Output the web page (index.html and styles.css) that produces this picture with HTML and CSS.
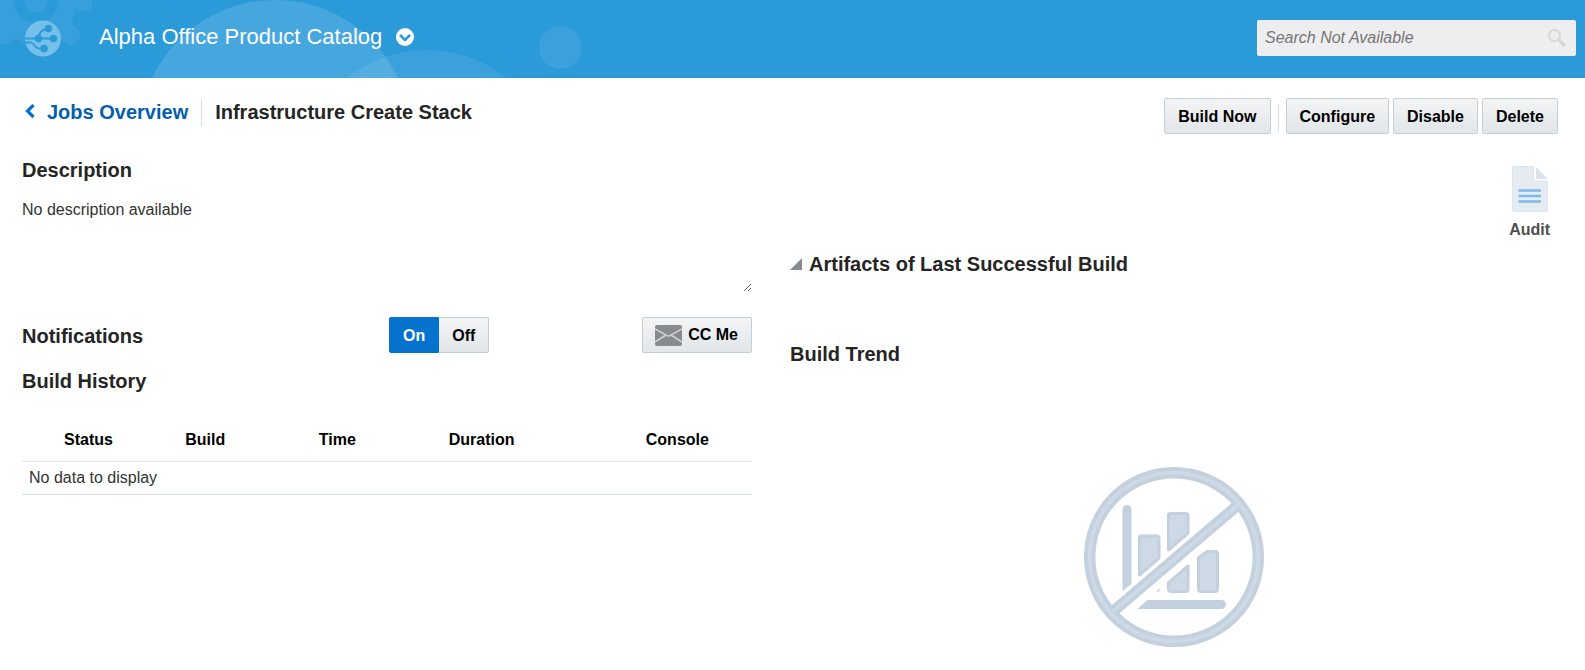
FILE: index.html
```html
<!DOCTYPE html>
<html lang="en">
<head>
<meta charset="utf-8">
<title>Infrastructure Create Stack</title>
<link rel="stylesheet" href="styles.css">
</head>
<body>
<header class="banner">
  <svg class="banner-art" width="640" height="78" viewBox="0 0 640 78" aria-hidden="true">
    <g fill="#fff">
      <circle cx="275" cy="136" r="136" opacity=".13"/>
      <circle cx="427" cy="178" r="128" opacity=".08"/>
      <circle cx="560.5" cy="47.5" r="21.5" opacity=".08"/>
      <path opacity=".06" fill-rule="evenodd" d="M0 0H92V7Q91 11 87 11H79Q75 11 74 15L72 21Q72 24 74 26L80 31Q82 34 80 37L75 43Q72 46 68 44L60 39Q58 38 55 39Q46 46 36 46Q26 46 19 40Q16 38 13 40L6 44Q3 45 0 43ZM13 0A23 23 0 1 0 59 0H48A12 12 0 1 1 24 0Z"/>
    </g>
  </svg>
  <svg class="logo" width="37" height="37" viewBox="0 0 37 37" aria-hidden="true">
    <circle cx="18" cy="18.500" r="18" fill="#74c0e9"/>
    <g fill="#2b9ad9"><circle cx="23.500" cy="8.500" r="3.800"/><circle cx="13.500" cy="18.500" r="3.800"/><circle cx="28.500" cy="18.500" r="3.800"/><circle cx="19" cy="28.500" r="3.800"/></g>
    <path d="M0 18.500H28M13.500 18Q14 10 23 8.500M0 22.500H6Q8 23 10 26T18 28.500" fill="none" stroke="#2b9ad9" stroke-width="1.800"/>
  </svg>
  <button class="project" type="button">Alpha Office Product Catalog
    <svg width="18" height="18" viewBox="0 0 18 18" aria-hidden="true"><circle cx="9" cy="9" r="9" fill="#fff"/><path d="M4 7L9 12L14 7" fill="none" stroke="#2b9ad9" stroke-width="2.600"/></svg>
  </button>
  <div class="search">
    <input type="search" placeholder="Search Not Available" aria-label="Search" disabled>
    <svg width="18" height="18" viewBox="0 0 18 18" fill="none" stroke="#d6d7d9" aria-hidden="true"><circle cx="6.500" cy="6.500" r="5.500" stroke-width="2"/><path d="M11 11L17 17" stroke-width="3.500"/></svg>
  </div>
</header>
<main class="page">
  <div class="titlebar">
    <nav class="crumbs">
      <a href="#"><svg width="10" height="16" viewBox="0 0 10 16" aria-hidden="true"><path d="M8.500 1L2.500 7L8.500 13" fill="none" stroke="#0572ce" stroke-width="3.200"/></svg>Jobs Overview</a>
      <h1>Infrastructure Create Stack</h1>
    </nav>
    <div class="actions">
      <button class="btn" type="button">Build Now</button>
      <span class="divider"></span>
      <button class="btn" type="button">Configure</button>
      <button class="btn" type="button">Disable</button>
      <button class="btn" type="button">Delete</button>
    </div>
  </div>
  <div class="columns">
    <div class="left">
      <h2><label for="description">Description</label></h2>
      <textarea id="description" class="description" readonly>No description available</textarea>
      <div class="notify">
        <h2>Notifications</h2>
        <div class="toggle" role="group" aria-label="Notifications">
          <button class="btn on" type="button" aria-pressed="true">On</button>
          <button class="btn off" type="button" aria-pressed="false">Off</button>
        </div>
        <button class="btn cc" type="button">
          <svg width="27" height="21" viewBox="0 0 27 21" aria-hidden="true"><rect width="27" height="21" rx="2" fill="#878b8e"/><path d="M0 4L11 10Q13.500 12 16 10L27 4M0 17L11 10M27 17L16 10" fill="none" stroke="#cdd1d4" stroke-width="1.500"/></svg>
          CC Me
        </button>
      </div>
      <h2 class="history-title">Build History</h2>
      <table class="history">
        <thead><tr><th class="status">Status</th><th class="build">Build</th><th class="time">Time</th><th class="duration">Duration</th><th>Console</th></tr></thead>
        <tbody><tr><td colspan="5">No data to display</td></tr></tbody>
      </table>
    </div>
    <div class="right">
      <button class="audit" type="button">
        <svg width="36" height="46" viewBox="0 0 36 46" aria-hidden="true"><path d="M1 .5H21.500V15H35.500V44.500Q35.500 45.500 34.500 45.500H1.500Q.5 45.500 .5 44.500V1.500Z" fill="#e5ebf3" stroke="#dce3ec"/><path d="M24 1V13H36Z" fill="#dce3ec"/><path d="M6.500 24.500H29M6.500 30H29M6.500 35.500H29" stroke="#7fb9e6" stroke-width="2.400"/></svg>
        Audit
      </button>
      <h2 class="artifacts"><svg width="12" height="12" viewBox="0 0 12 12" aria-hidden="true"><path d="M12 0V12H0Z" fill="#878b8e"/></svg>Artifacts of Last Successful Build</h2>
      <h2 class="trend-title">Build Trend</h2>
      <svg class="trend" width="180" height="180" viewBox="0 0 180 180" role="img" aria-label="No build trend">
        <g fill="#cdd9e5" stroke="#c3d0dd" stroke-width="3" stroke-linejoin="round">
          <path d="M55.500 108V71Q55.500 69 57.500 69H73Q75 69 75 71V91Z"/>
          <path d="M84.500 83V48Q84.500 46.500 86.500 46.500H102Q104 46.500 104 48.500V66Z"/>
          <path d="M104 99V122Q104 124.500 102 124.500H87Q84.500 124.500 84.500 122V116Z"/>
          <path d="M114.500 91L123 84.500H131Q133.500 84.500 133.500 87V122Q133.500 124.500 131 124.500H117Q114.500 124.500 114.500 122Z"/>
        </g>
        <path d="M38.500 124V42.500A4.500 4.500 0 0 1 47.500 42.500V117ZM53.500 142L63.500 133H137.500A4.500 4.500 0 0 1 137.500 142ZM72 125L76 121Q76 125 72 125Z" fill="#c3d0dd"/>
        <g fill="none"><path d="M29 144.500L154 38" stroke="#c3d0dd" stroke-width="11"/><circle cx="90" cy="90" r="84.300" stroke="#c3d0dd" stroke-width="11.400"/><circle cx="90" cy="90" r="84.300" stroke="#cdd9e5" stroke-width="4"/><path d="M29 144.500L154 38" stroke="#cdd9e5" stroke-width="4"/></g>
      </svg>
    </div>
  </div>
</main>
</body>
</html>
```
FILE: styles.css
```css
* { box-sizing: border-box; }
body { margin: 0; background: #fff; color: #333; font: 16px/20px "Liberation Sans", Arial, sans-serif; }
button, input, textarea { font: inherit; }
svg { display: block; flex: none; }
h1, h2 { margin: 0; color: #252525; font-size: 20px; line-height: 24px; font-weight: bold; }

.banner { position: relative; display: flex; align-items: center; height: 78px; padding: 0 9px 2px 25px; background: #2b9ad9; overflow: hidden; }
.banner-art { position: absolute; left: 0; top: 0; }
.logo, .project, .search { position: relative; }
.project { display: flex; align-items: center; gap: 14px; margin-left: 37px; padding: 0 0 2px; border: 0; background: none; color: #fff; font-size: 22px; line-height: 28px; }
.search { display: flex; align-items: center; width: 319px; height: 36px; margin-left: auto; padding: 0 10px 0 8px; border-radius: 2px; background: #eeeef0; }
.search input { flex: 1; min-width: 0; padding: 0; border: 0; background: none; font-style: italic; }
.search input::placeholder { color: #757575; }

.page { padding: 20px 27px 20px 22px; }
.titlebar { display: flex; justify-content: space-between; }
.crumbs { display: flex; height: 28px; align-items: center; }
.crumbs a { display: flex; align-items: center; gap: 12px; padding: 0 13px 0 3px; color: #045fab; font-size: 20px; line-height: 28px; font-weight: bold; text-decoration: none; }
.crumbs h1 { padding-left: 13px; border-left: 1px solid #d6dfe6; line-height: 27px; }
.actions { display: flex; align-items: center; gap: 4px; }
.divider { width: 1px; height: 28px; margin: 4px 3px 0; background: #d6dfe6; }
.btn { height: 36px; padding: 1px 13px 0; border: 1px solid #c4ced7; border-radius: 2px; background: linear-gradient(#f3f4f5, #e2e6e9); color: #000; font-weight: bold; }

.columns { display: grid; grid-template-columns: 730fr 768fr; gap: 38px; }
.left { min-width: 0; padding-top: 24px; }
.description { display: block; width: 100%; height: 96px; margin-top: 14px; padding: 4px 0; border: 0; outline: 0; background: none; color: #333; resize: vertical; }
.notify { display: grid; grid-template-columns: 367fr 200fr 163fr; align-items: center; margin-top: 25px; }
.notify h2 { padding-top: 2px; }
.toggle { display: flex; }
.on { border-color: #0572ce; border-radius: 2px 0 0 2px; background: #0572ce; color: #fff; }
.off { border-left: 0; border-radius: 0 2px 2px 0; }
.cc { display: flex; align-items: center; gap: 6px; justify-self: end; padding: 0 13px 0 12px; }
.history-title { margin-top: 16px; }
.history { width: 100%; margin-top: 26px; border-collapse: collapse; table-layout: fixed; }
.history th { height: 42px; padding: 0 0 0 42px; border-bottom: 1px solid #dfe4e7; color: #000; text-align: left; }
.history td { height: 33px; padding: 0 7px; border-bottom: 1px solid #d6dfe6; }
.status { width: 16.6%; }
.build { width: 18.3%; }
.time { width: 17.8%; }
.duration { width: 27%; }

.right { display: flex; flex-direction: column; padding-top: 32px; }
.audit { display: flex; flex-direction: column; align-items: center; gap: 8px; align-self: flex-end; margin-right: 8px; padding: 0; border: 0; background: none; color: #4f4f4f; font-weight: bold; }
.artifacts { display: flex; align-items: center; gap: 7px; margin-top: 12px; }
.trend-title { margin-top: 66px; }
.trend { align-self: center; margin-top: 101px; }
```
